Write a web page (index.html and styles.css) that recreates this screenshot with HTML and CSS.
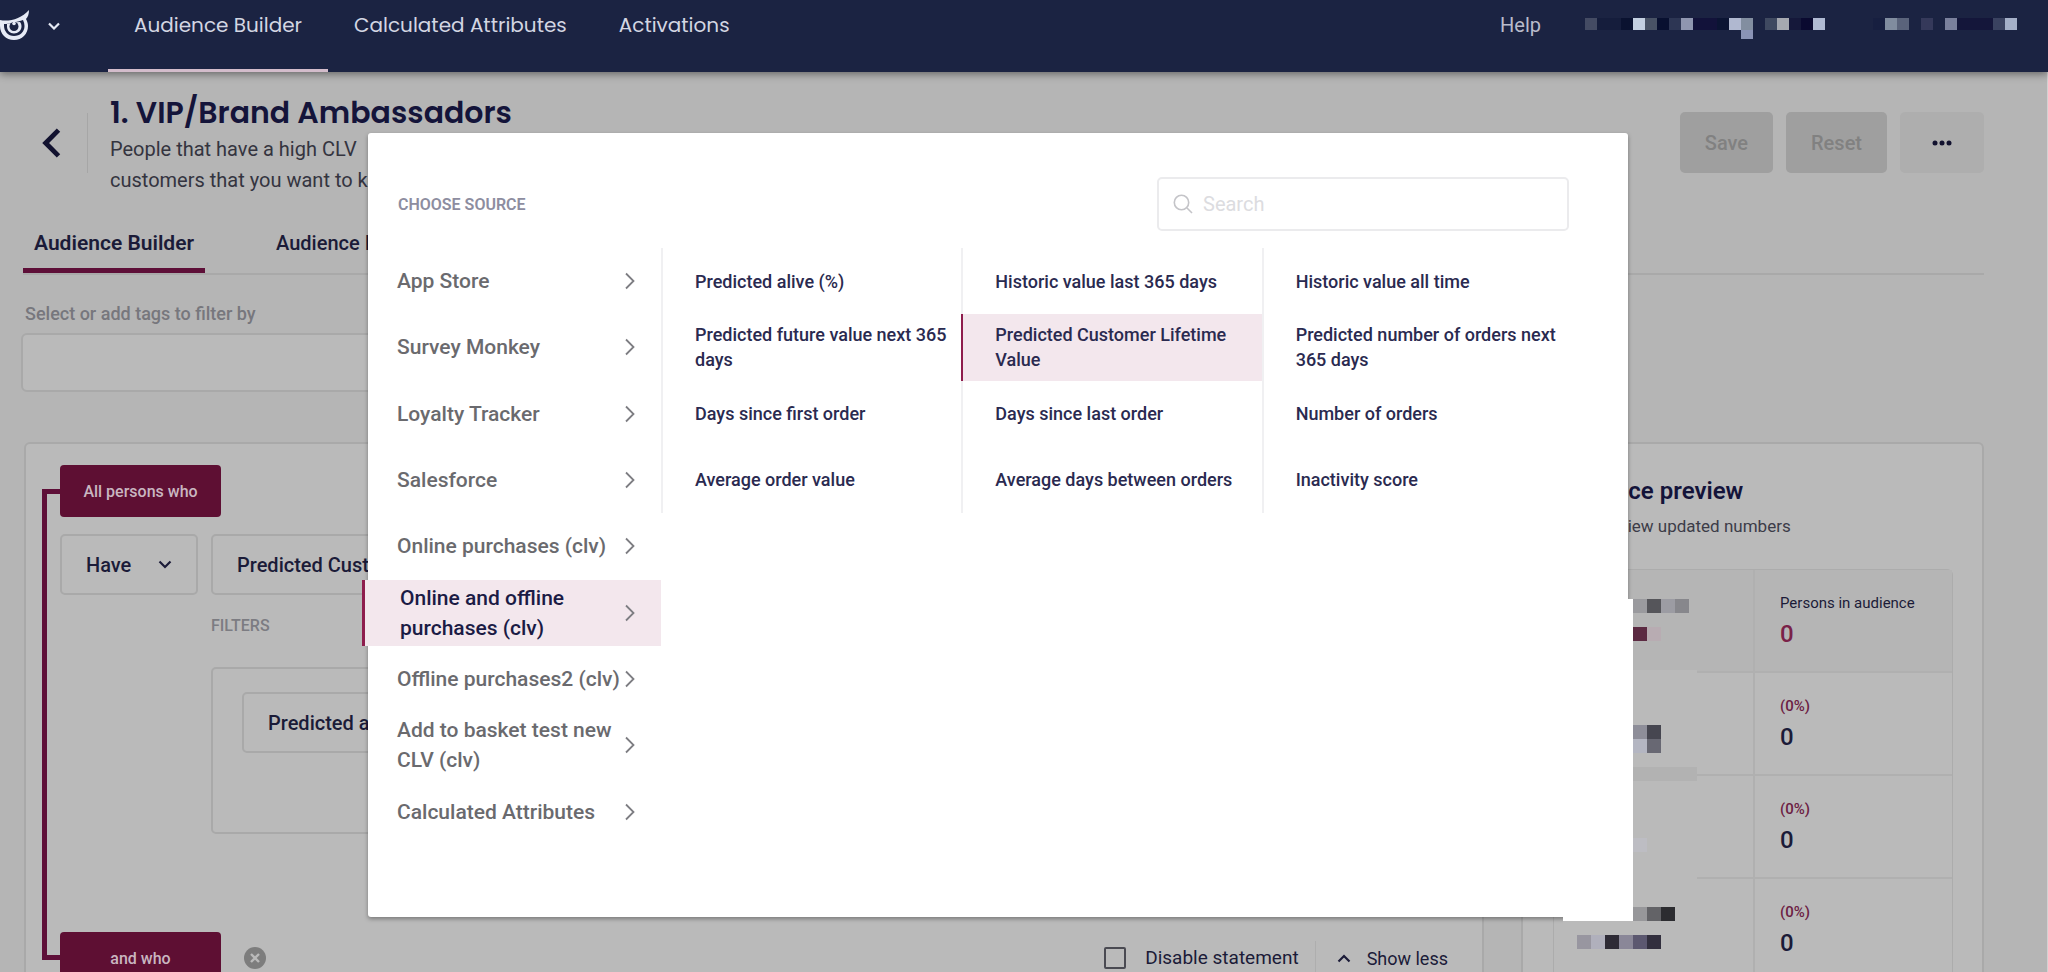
FILE: index.html
```html
<!DOCTYPE html>
<html lang="en">
<head>
<meta charset="utf-8">
<title>Audience Builder</title>
<link rel="stylesheet" href="styles.css">
</head>
<body>
<div class="app">
  <header class="topbar">
    <button class="brand" aria-label="Switch workspace">
      <svg class="brand-logo" viewBox="0 0 30 32" aria-hidden="true">
        <path d="M0 10C9 12 21 9 29 0c0 4-1 7-3 9 1 2 2 4 2 7 0 8-6 14-14 14S0 24 0 16z" fill="#e6eaf5"/>
        <path d="M4 14c6 0 9-1 12-2 3-1 5-1 7-2 1 2 1.500 4 1.500 6 0 6-4.500 10-10.500 10S4 21 4 16z" fill="#1b2342"/>
        <path d="M7 14c5 0 8-2 13-2 1 1 1.500 3 1.500 4.500 0 4-3.500 7-7.500 7s-7-3-7-7z" fill="#e6eaf5"/>
        <circle cx="14" cy="16.500" r="4.500" fill="#1b2342"/>
        <circle cx="14" cy="13.500" r="1.800" fill="#e6eaf5"/>
      </svg>
      <svg class="brand-caret" viewBox="0 0 12 8" aria-hidden="true"><path d="M1 1.500l5 5 5-5" fill="none" stroke="#e6eaf5" stroke-width="2.200"/></svg>
    </button>
    <nav class="main-nav" aria-label="Main">
      <a class="nav-link is-active" href="#">Audience Builder</a>
      <a class="nav-link" href="#">Calculated Attributes</a>
      <a class="nav-link" href="#">Activations</a>
    </nav>
    <div class="account">
      <a class="help-link" href="#">Help</a>
      <svg class="mask-company" viewBox="0 0 240 21" shape-rendering="crispEdges" aria-hidden="true">
        <path fill="#444b63" d="M0 0h12v12H0z"/><path fill="#151d3c" d="M12 0h24v12H12z"/><path fill="#0a1230" d="M36 0h12v12H36z"/><path fill="#c3cfe0" d="M48 0h12v12H48z"/><path fill="#485265" d="M60 0h12v12H60z"/><path fill="#081030" d="M72 0h12v12H72z"/><path fill="#2d3654" d="M84 0h12v12H84z"/><path fill="#8f96b0" d="M96 0h12v12H96z"/><path fill="#12123a" d="M108 0h24v12H108z"/><path fill="#0b1433" d="M132 0h12v12H132z"/><path fill="#b0b8d0" d="M144 0h12v12H144z"/><path fill="#828ea0" d="M156 0h12v12H156z"/><path fill="#8a93b5" d="M156 12h12v9H156z"/><path fill="#3f4960" d="M180 0h12v12H180z"/><path fill="#a5a8b0" d="M192 0h12v12H192z"/><path fill="#15183a" d="M204 0h12v12H204z"/><path fill="#0a0a30" d="M216 0h12v12H216z"/><path fill="#b0bad3" d="M228 0h12v12H228z"/>
      </svg>
      <svg class="mask-user" viewBox="0 0 144 21" shape-rendering="crispEdges" aria-hidden="true">
        <path fill="#171f40" d="M0 0h12v12H0z"/><path fill="#808c9f" d="M12 0h12v12H12z"/><path fill="#5a637b" d="M24 0h12v12H24z"/><path fill="#35395a" d="M48 0h12v12H48z"/><path fill="#7a809c" d="M72 0h12v12H72z"/><path fill="#14163a" d="M84 0h36v12H84z"/><path fill="#3a4260" d="M120 0h12v12H120z"/><path fill="#a5b0c8" d="M132 0h12v12H132z"/>
      </svg>
    </div>
  </header>

  <main class="page">
    <section class="page-head">
      <button class="back" aria-label="Back"><svg viewBox="0 0 18 28" aria-hidden="true"><path d="M16 2L4 14l12 12" fill="none" stroke="#12122f" stroke-width="4.500"/></svg></button>
      <div class="intro">
        <h1>1. VIP/Brand Ambassadors</h1>
        <p>People that have a high CLV<br>customers that you want to keep</p>
      </div>
      <div class="actions">
        <button class="btn" disabled>Save</button>
        <button class="btn" disabled>Reset</button>
        <button class="btn btn-more" aria-label="More"><svg viewBox="0 0 20 6" aria-hidden="true"><circle cx="3" cy="3" r="2.500"/><circle cx="10" cy="3" r="2.500"/><circle cx="17" cy="3" r="2.500"/></svg></button>
      </div>
    </section>

    <nav class="tabs" aria-label="Audience">
      <a class="tab is-active" href="#">Audience Builder</a>
      <a class="tab" href="#">Audience Insights</a>
    </nav>

    <div class="tag-filter">
      <label for="tags">Select or add tags to filter by</label>
      <input id="tags" type="text">
    </div>

    <div class="workspace">
      <section class="card builder">
        <div class="connector"></div>
        <div class="rules">
          <button class="chip">All persons who</button>
          <div class="condition">
            <button class="picker have">Have <svg viewBox="0 0 14 9" aria-hidden="true"><path d="M1.500 1.500L7 7l5.500-5.500" fill="none" stroke="#1b1b38" stroke-width="2.200"/></svg></button>
            <div class="attribute">
              <button class="picker">Predicted Customer Lifetime Value</button>
              <h2 class="filters-title">FILTERS</h2>
              <div class="filters"><button class="picker">Predicted alive (%)</button></div>
            </div>
          </div>
          <div class="rule-foot">
            <button class="chip">and who</button>
            <button class="remove" aria-label="Remove statement"><svg viewBox="0 0 22 22" aria-hidden="true"><circle cx="11" cy="11" r="11" fill="#7d7d7d"/><path d="M7 7l8 8M15 7l-8 8" stroke="#bababa" stroke-width="2.400"/></svg></button>
            <div class="foot-tools">
              <label class="disable"><input type="checkbox">Disable statement</label>
              <button class="show-less"><svg viewBox="0 0 14 9" aria-hidden="true"><path d="M1.500 7.500L7 2l5.500 5.500" fill="none" stroke="#1b1b38" stroke-width="2.200"/></svg>Show less</button>
            </div>
          </div>
        </div>
      </section>

      <aside class="card preview">
        <h2>Audience preview</h2>
        <p>Press to view updated numbers</p>
        <table class="counts">
          <tr class="total"><th scope="row"></th><td><span class="caption">Persons in audience</span><strong>0</strong></td></tr>
          <tr><th scope="row"></th><td><span class="percent">(0%)</span><strong>0</strong></td></tr>
          <tr><th scope="row"></th><td><span class="percent">(0%)</span><strong>0</strong></td></tr>
          <tr><th scope="row"></th><td><span class="percent">(0%)</span><strong>0</strong></td></tr>
        </table>
      </aside>
    </div>
  </main>

  <div class="dialog" role="dialog" aria-label="Choose source">
    <div class="dialog-head">
      <h2>CHOOSE SOURCE</h2>
      <label class="search">
        <svg viewBox="0 0 20 20" aria-hidden="true"><circle cx="8.500" cy="8.500" r="7.200" fill="none" stroke="#c4c4c8" stroke-width="1.600"/><path d="M14 14l5 5" stroke="#c4c4c8" stroke-width="1.600"/></svg>
        <input type="search" placeholder="Search" aria-label="Search">
      </label>
    </div>
    <div class="dialog-body">
      <div class="sources">
        <button class="source">App Store<svg viewBox="0 0 10 18" aria-hidden="true"><path d="M1 1.500L8.500 9 1 16.500"/></svg></button>
        <button class="source">Survey Monkey<svg viewBox="0 0 10 18" aria-hidden="true"><path d="M1 1.500L8.500 9 1 16.500"/></svg></button>
        <button class="source">Loyalty Tracker<svg viewBox="0 0 10 18" aria-hidden="true"><path d="M1 1.500L8.500 9 1 16.500"/></svg></button>
        <button class="source">Salesforce<svg viewBox="0 0 10 18" aria-hidden="true"><path d="M1 1.500L8.500 9 1 16.500"/></svg></button>
        <button class="source">Online purchases (clv)<svg viewBox="0 0 10 18" aria-hidden="true"><path d="M1 1.500L8.500 9 1 16.500"/></svg></button>
        <button class="source is-active"><span>Online and offline<br>purchases (clv)</span><svg viewBox="0 0 10 18" aria-hidden="true"><path d="M1 1.500L8.500 9 1 16.500"/></svg></button>
        <button class="source">Offline purchases2 (clv)<svg viewBox="0 0 10 18" aria-hidden="true"><path d="M1 1.500L8.500 9 1 16.500"/></svg></button>
        <button class="source"><span>Add to basket test new<br>CLV (clv)</span><svg viewBox="0 0 10 18" aria-hidden="true"><path d="M1 1.500L8.500 9 1 16.500"/></svg></button>
        <button class="source">Calculated Attributes<svg viewBox="0 0 10 18" aria-hidden="true"><path d="M1 1.500L8.500 9 1 16.500"/></svg></button>
      </div>
      <div class="fields">
        <button class="field">Predicted alive (%)</button>
        <button class="field">Historic value last 365 days</button>
        <button class="field">Historic value all time</button>
        <button class="field">Predicted future value next 365 days</button>
        <button class="field is-active">Predicted Customer Lifetime Value</button>
        <button class="field">Predicted number of orders next 365 days</button>
        <button class="field">Days since first order</button>
        <button class="field">Days since last order</button>
        <button class="field">Number of orders</button>
        <button class="field">Average order value</button>
        <button class="field">Average days between orders</button>
        <button class="field">Inactivity score</button>
      </div>
    </div>
    <svg class="mask-counts" viewBox="0 0 134 350" shape-rendering="crispEdges" aria-hidden="true">
      <path fill="#b5b5b5" d="M70 0h64v71H70z"/><path fill="#bababa" d="M70 71h64v279H70zM0 322h70v28H0z"/>
      <path fill="#fff" d="M0 300h70v22H0zM56 0h14v322H56z"/>
      <path fill="#9a9a9e" d="M70 0h14v14H70z"/><path fill="#55555a" d="M84 0h14v14H84z"/><path fill="#9c9ca3" d="M98 0h14v14H98z"/><path fill="#87878c" d="M112 0h14v14H112z"/>
      <path fill="#5c2a42" d="M70 28h14v14H70z"/><path fill="#b8acb2" d="M84 28h14v14H84z"/>
      <path fill="#8e8e99" d="M70 126h14v14H70z"/><path fill="#464650" d="M84 126h14v14H84z"/><path fill="#b4b6c2" d="M70 140h14v14H70z"/><path fill="#686873" d="M84 140h14v14H84z"/>
      <path fill="#b2b2b2" d="M70 168h64v14H70z"/><path fill="#bdbdc3" d="M70 239h14v14H70z"/>
      <path fill="#97979a" d="M70 308h14v14H70z"/><path fill="#636367" d="M84 308h14v14H84z"/><path fill="#2c2c30" d="M98 308h14v14H98z"/>
      <path fill="#9896a0" d="M14 336h14v14H14z"/><path fill="#b0b0bc" d="M28 336h14v14H28z"/><path fill="#2e2b36" d="M42 336h14v14H42z"/><path fill="#8a8798" d="M56 336h14v14H56z"/><path fill="#5c5870" d="M70 336h14v14H70z"/><path fill="#322f3e" d="M84 336h14v14H84z"/>
    </svg>
  </div>
</div>
</body>
</html>
```
FILE: styles.css
```css
* { box-sizing: border-box; }
body {
  margin: 0;
  background: #b5b5b5;
  color: #1b1b38;
  font-family: Roboto, "Noto Sans", sans-serif;
  font-size: 20px;
}
button, input { font: inherit; color: inherit; }
button { margin: 0; padding: 0; border: 0; background: none; text-align: left; }
h1, h2, p { margin: 0; }
a { color: inherit; text-decoration: none; }
svg { display: block; flex: none; }

.app { position: relative; height: 100vh; overflow: hidden; }

/* Top bar */
.topbar {
  position: relative;
  display: flex;
  height: 72px;
  padding-right: 31px;
  background: #1b2342;
  box-shadow: 0 2px 8px rgba(0, 0, 0, 0.45);
  color: #d3d6e2;
}
.brand { display: flex; align-items: center; gap: 18px; width: 108px; height: 52px; }
.brand-logo { width: 30px; height: 32px; }
.brand-caret { width: 12px; height: 8px; }
.main-nav { display: flex; }
.nav-link {
  padding: 9px 26px 0;
  border-bottom: 3px solid transparent;
  font-family: Poppins, Inter, sans-serif;
  font-size: 20px;
  font-weight: 400;
  line-height: 32px;
}
.nav-link.is-active { border-color: #d3bccb; }
.account { display: flex; align-items: flex-start; margin-left: auto; padding-top: 10px; }
.help-link { margin-right: 44px; font-size: 20px; line-height: 30px; color: #b9bccb; }
.mask-company { width: 240px; height: 21px; margin: 8px 48px 0 0; }
.mask-user { width: 144px; height: 21px; margin-top: 8px; }

/* Page heading */
.page { min-height: 900px; padding: 20px 63px 0 23px; border-right: 1px solid #d2d2d2; }
.page-head { display: flex; align-items: flex-start; height: 146px; }
.back { width: 65px; height: 60px; margin-top: 21px; padding-left: 18px; border-right: 1px solid #a6a6a6; }
.back svg { width: 20px; height: 30px; }
.intro { margin-left: 22px; }
.intro h1 { font-family: Poppins, Inter, sans-serif; font-size: 30px; font-weight: 600; line-height: 42px; color: #14143a; }
.intro p { line-height: 31px; color: #34343f; white-space: nowrap; }
.actions { display: flex; gap: 13px; margin: 20px 0 0 auto; }
.btn {
  min-width: 84px;
  height: 61px;
  padding: 0 25px;
  border-radius: 5px;
  background: #9f9f9f;
  color: #818181;
  font-weight: 500;
  text-align: center;
}
.btn-more { padding: 0 32px; background: #aeaeae; }
.btn-more svg { width: 20px; height: 6px; fill: #12122f; }

.tabs { display: flex; gap: 60px; border-bottom: 2px solid #a9a9a9; }
.tab { height: 35px; padding: 0 11px; line-height: 10px; font-weight: 500; }
.tab.is-active { border-bottom: 5px solid #5e0f38; margin-bottom: -1px; font-size: 21px; font-weight: 600; }

.tag-filter { width: 50%; margin: 26px 0 0 -2px; }
.tag-filter label { display: block; margin-left: 4px; font-size: 18px; font-weight: 500; line-height: 25px; color: #77777d; }
.tag-filter input {
  display: block;
  width: 100%;
  height: 59px;
  margin-top: 7px;
  border: 2px solid #a9a9a9;
  border-radius: 6px;
  background: #bababa;
}

/* Builder */
.workspace { display: flex; gap: 37px; margin-top: 50px; padding-left: 1px; }
.card { border: 2px solid #a9a9a9; border-radius: 6px; background: #bababa; }
.builder { flex: 1; display: grid; grid-template-columns: 18px 1fr; padding: 21px 34px 40px 16px; }
.connector { margin: 24px 0; border: 5px solid #5e0f38; border-right: 0; }
.chip {
  width: 161px;
  height: 52px;
  border-radius: 4px;
  background: #5e0f33;
  color: #c9b6c0;
  font-size: 16px;
  font-weight: 500;
  text-align: center;
}
.condition { display: flex; align-items: flex-start; gap: 13px; margin-top: 17px; }
.picker {
  height: 61px;
  padding: 0 24px;
  border: 2px solid #a9a9a9;
  border-radius: 5px;
  font-weight: 500;
  white-space: nowrap;
}
.have { display: flex; align-items: center; justify-content: space-between; width: 138px; }
.have svg { width: 14px; height: 9px; }
.attribute { flex: 1; }
.filters-title { margin: 19px 0 0; font-size: 16px; font-weight: 500; line-height: 24px; color: #7c7c82; }
.filters { margin-top: 29px; height: 167px; padding: 23px 29px; border: 2px solid #a9a9a9; border-radius: 5px; }
.rule-foot { display: flex; align-items: center; margin-top: 98px; }
.remove { margin-left: 23px; }
.remove svg { width: 22px; height: 22px; }
.foot-tools { display: flex; align-items: center; margin-left: auto; }
.disable { display: flex; align-items: center; gap: 19px; padding-right: 16px; border-right: 1px solid #aeaeae; font-size: 19px; line-height: 34px; }
.disable input { appearance: none; width: 22px; height: 22px; margin: 0; border: 2px solid #4a4a52; border-radius: 2px; }
.show-less { display: flex; align-items: center; gap: 16px; padding-left: 21px; font-size: 18px; }
.show-less svg { width: 14px; height: 9px; }

/* Preview */
.preview { width: 463px; padding: 31px 29px 0 30px; }
.preview h2 { font-size: 24px; font-weight: 600; line-height: 32px; color: #14143a; }
.preview p { margin-top: 7px; font-size: 17px; line-height: 24px; color: #3c3c48; }
.counts { width: 100%; margin-top: 31px; border: 1px solid #acacac; border-radius: 6px; border-spacing: 0; }
.counts tr { height: 103px; }
.counts th { width: 50%; }
.counts th, .counts td { padding: 4px 0 0 25px; border-bottom: 2px solid #b0b0b0; }
.counts td { border-left: 2px solid #b0b0b0; }
.counts .total { background: #b5b5b5; }
.caption, .percent { display: block; font-size: 15px; line-height: 20px; }
.percent { color: #6c2043; font-weight: 500; }
.counts strong { display: block; margin-top: 3px; font-size: 24px; font-weight: 500; line-height: 36px; }
.total strong { color: #7a2148; }

/* Source dialog */
.dialog {
  position: absolute;
  top: 133px;
  left: 368px;
  right: 420px;
  height: 784px;
  border-radius: 3px;
  background: #fff;
  box-shadow: 0 2px 4px rgba(0, 0, 0, 0.35);
}
.dialog-head { display: flex; align-items: center; justify-content: space-between; padding: 44px 59px 0 30px; }
.dialog-head h2 { font-size: 16px; font-weight: 600; color: #8d8da0; }
.search {
  display: flex;
  align-items: center;
  gap: 10px;
  width: 412px;
  height: 54px;
  padding: 0 14px;
  border: 2px solid #ebebed;
  border-radius: 5px;
}
.search svg { width: 20px; height: 20px; }
.search input { flex: 1; min-width: 0; padding: 0; border: 0; background: none; }
.search input::placeholder { color: #dcdce0; opacity: 1; }
.dialog-body { display: flex; align-items: flex-start; padding: 17px 66px 0 0; }
.sources { display: grid; grid-auto-rows: 1fr; width: 293px; height: 597px; }
.source {
  display: flex;
  align-items: center;
  justify-content: space-between;
  width: 100%;
  padding: 0 26px 0 29px;
  color: #6a6a6e;
  font-size: 21px;
  font-weight: 500;
  line-height: 30px;
  white-space: nowrap;
}
.source svg { width: 10px; height: 18px; fill: none; stroke: #7d7d82; stroke-width: 1.8; }
.source.is-active {
  width: 299px;
  margin-left: -6px;
  padding-left: 35px;
  border-left: 3px solid #8e1d4d;
  background: #f3e7ed;
  color: #1b1b45;
}
.fields { flex: 1; display: grid; grid-template-columns: repeat(3, 1fr); grid-auto-rows: 1fr; height: 265px; }
.field {
  padding: 0 4px 0 32px;
  border-left: 2px solid #f0f0f2;
  color: #2a2a50;
  font-size: 18px;
  font-weight: 500;
  line-height: 25px;
}
.field.is-active { border-color: #8e1d4d; background: #f3e7ed; }
.mask-counts { position: absolute; top: 466px; right: -69px; width: 134px; height: 350px; }
```
